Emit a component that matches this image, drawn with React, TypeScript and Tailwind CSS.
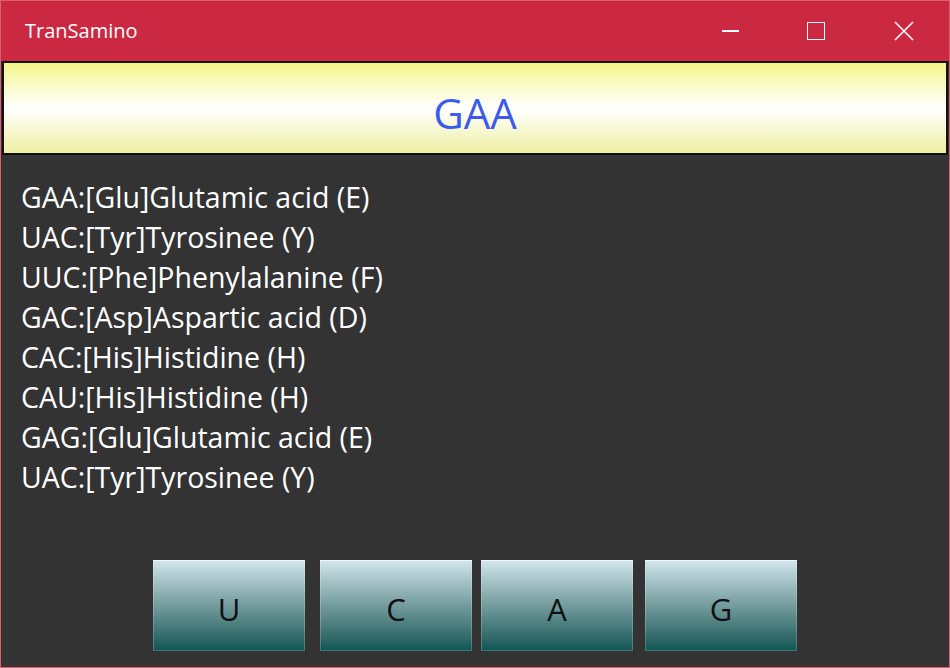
import React from "react";

const rows = [
  "GAA:[Glu]Glutamic acid (E)",
  "UAC:[Tyr]Tyrosinee (Y)",
  "UUC:[Phe]Phenylalanine (F)",
  "GAC:[Asp]Aspartic acid (D)",
  "CAC:[His]Histidine (H)",
  "CAU:[His]Histidine (H)",
  "GAG:[Glu]Glutamic acid (E)",
  "UAC:[Tyr]Tyrosinee (Y)",
];

const btnCls =
  "h-[91px] w-[152px] pt-[7px] flex items-center justify-center text-[31px] text-[#111] bg-gradient-to-b from-[#d3e7ee] to-[#0a5654] shadow-[inset_0_1px_0_0_rgba(255,255,255,0.5),inset_0_0_0_1px_rgba(255,255,255,0.2)]";

export default function App() {
  return (
    <div
      className="w-[950px] h-[668px] flex flex-col bg-[#333333] border border-[#d9606f] overflow-hidden"
      style={{ fontFamily: '"Open Sans", "Noto Sans", sans-serif' }}
    >
      <div className="h-[60px] shrink-0 bg-[#cb2941] flex items-center text-white">
        <div className="pl-[24px] text-[20px] flex-1 pb-[1px]">TranSamino</div>
        <div className="flex items-center h-full">
          <div className="w-[86px] h-full flex items-center justify-center">
            <div className="w-[17px] h-[1.5px] bg-white" />
          </div>
          <div className="w-[86px] h-full flex items-center justify-center">
            <div className="w-[18px] h-[18px] border-[1.5px] border-white" />
          </div>
          <div className="w-[90px] h-full flex items-center justify-center">
            <svg width="20" height="20" viewBox="0 0 20 20">
              <path d="M1 1 L19 19 M19 1 L1 19" stroke="white" strokeWidth="1.6" />
            </svg>
          </div>
        </div>
      </div>
      <div className="mx-[1px] h-[94px] shrink-0 border-2 border-[#111] bg-gradient-to-b from-[#f5f586] via-white to-[#efefa0] flex items-center justify-center">
        <span className="text-[42px] text-[#3b5bea] leading-none pt-[10px]">GAA</span>
      </div>
      <div className="pl-[20px] pt-[22px] flex flex-col text-white text-[28.5px] leading-[40px]">
        {rows.map((r, i) => (
          <div key={i}>{r}</div>
        ))}
      </div>
      <div className="mt-[63px] pl-[152px] flex">
        <div className={btnCls}>U</div>
        <div className={btnCls + " ml-[15px]"}>C</div>
        <div className={btnCls + " ml-[9px]"}>A</div>
        <div className={btnCls + " ml-[12px]"}>G</div>
      </div>
    </div>
  );
}
